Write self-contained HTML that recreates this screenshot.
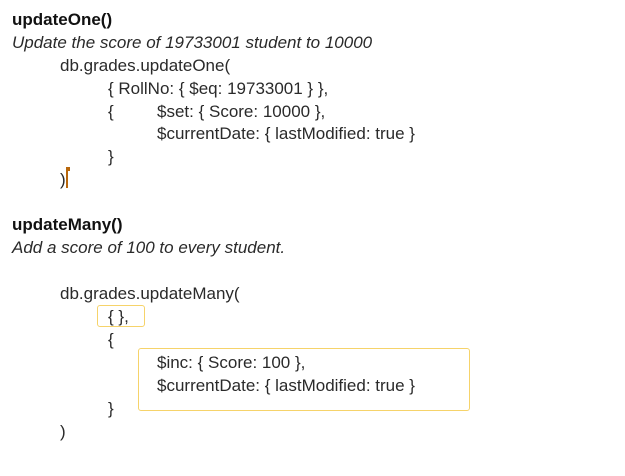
<!DOCTYPE html>
<html><head><style>
body{margin:0;width:625px;height:476px;background:#fff;font-family:"Liberation Sans",Arial,sans-serif;font-size:17px;color:#2a2a2a;position:relative;overflow:hidden}
div.t{position:absolute;line-height:20px;white-space:pre}
.b{font-weight:bold;color:#111}
.i{font-style:italic}
.box{position:absolute;border:1.5px solid #f6d36a;border-radius:3px}
</style></head><body>
<div class="t b" style="left:12px;top:10px">updateOne()</div>
<div class="t i" style="left:12px;top:33px">Update the score of 19733001 student to 10000</div>
<div class="t" style="left:60px;top:56px">db.grades.updateOne(</div>
<div class="t" style="left:108px;top:79px">{ RollNo: { $eq: 19733001 } },</div>
<div class="t" style="left:108px;top:102px">{</div>
<div class="t" style="left:157px;top:102px">$set: { Score: 10000 },</div>
<div class="t" style="left:157px;top:124px">$currentDate: { lastModified: true }</div>
<div class="t" style="left:108px;top:147px">}</div>
<div class="t" style="left:60px;top:170px">)</div>
<div style="position:absolute;left:66px;top:167px;width:2px;height:21px;background:#b8670c"></div>
<div style="position:absolute;left:66px;top:167px;width:4px;height:4px;background:#b8670c"></div>

<div class="t b" style="left:12px;top:215px">updateMany()</div>
<div class="t i" style="left:12px;top:238px">Add a score of 100 to every student.</div>
<div class="t" style="left:60px;top:284px">db.grades.updateMany(</div>
<div class="box" style="left:97px;top:305px;width:46px;height:20px"></div>
<div class="t" style="left:108px;top:307px">{ },</div>
<div class="t" style="left:108px;top:330px">{</div>
<div class="box" style="left:138px;top:348px;width:330px;height:61px"></div>
<div class="t" style="left:157px;top:353px">$inc: { Score: 100 },</div>
<div class="t" style="left:157px;top:376px">$currentDate: { lastModified: true }</div>
<div class="t" style="left:108px;top:399px">}</div>
<div class="t" style="left:60px;top:422px">)</div>
</body></html>
